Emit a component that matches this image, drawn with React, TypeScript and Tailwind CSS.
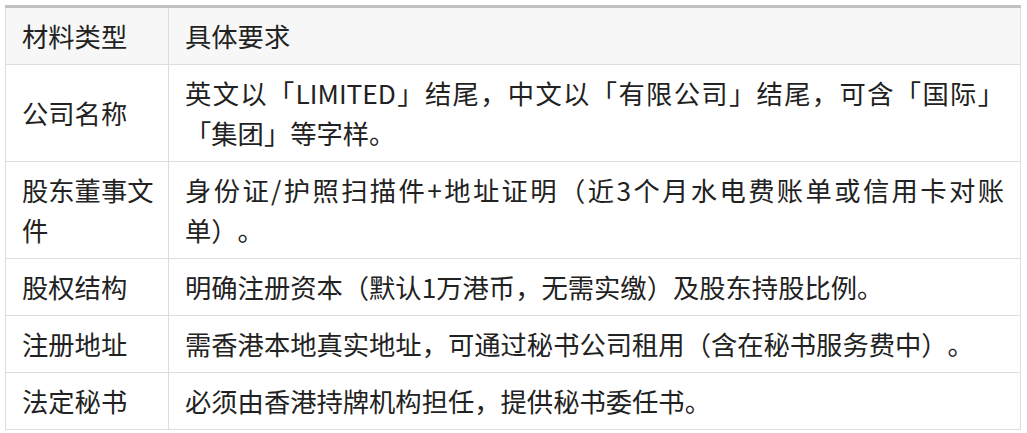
import React from "react";

const J = ({ children }: { children: React.ReactNode }) => (
  <span className="block text-justify [text-align-last:justify]">{children}</span>
);
const L = ({ children }: { children: React.ReactNode }) => <span className="block">{children}</span>;

const rows: [React.ReactNode, React.ReactNode][] = [
  [
    "公司名称",
    <>
      <J>英文以「LIMITED」结尾，中文以「有限公司」结尾，可含「国际」</J>
      <L>「集团」等字样。</L>
    </>,
  ],
  [
    <>
      <L>股东董事文</L>
      <L>件</L>
    </>,
    <>
      <J>身份证/护照扫描件+地址证明（近3个月水电费账单或信用卡对账</J>
      <L>单）。</L>
    </>,
  ],
  ["股权结构", "明确注册资本（默认1万港币，无需实缴）及股东持股比例。"],
  ["注册地址", "需香港本地真实地址，可通过秘书公司租用（含在秘书服务费中）。"],
  ["法定秘书", "必须由香港持牌机构担任，提供秘书委任书。"],
];

export default function App() {
  return (
    <div
      className="bg-white w-[1027px] h-[433px] pl-[5px] pt-[5px] text-[#222222] [text-spacing-trim:space-all]"
      style={{ fontFamily: '"Noto Sans CJK SC", "Noto Sans", sans-serif' }}
    >
      <table className="w-[1016px] border-collapse table-fixed text-[26.3px] leading-[40px] border-t-[3px] border-t-[#c0c0c0]">
        <colgroup>
          <col className="w-[163px]" />
          <col />
        </colgroup>
        <thead>
          <tr className="bg-[#f7f7f7]">
            <th className="border border-[#dddddd] border-t-0 px-4 py-2 text-left font-normal whitespace-nowrap">材料类型</th>
            <th className="border border-[#dddddd] border-t-0 px-4 py-2 text-left font-normal">具体要求</th>
          </tr>
        </thead>
        <tbody>
          {rows.map((r, i) => (
            <tr key={i}>
              <td className="border border-[#dddddd] px-4 py-2 align-middle whitespace-nowrap">{r[0]}</td>
              <td className="border border-[#dddddd] px-4 py-2 align-middle">{r[1]}</td>
            </tr>
          ))}
        </tbody>
      </table>
    </div>
  );
}
